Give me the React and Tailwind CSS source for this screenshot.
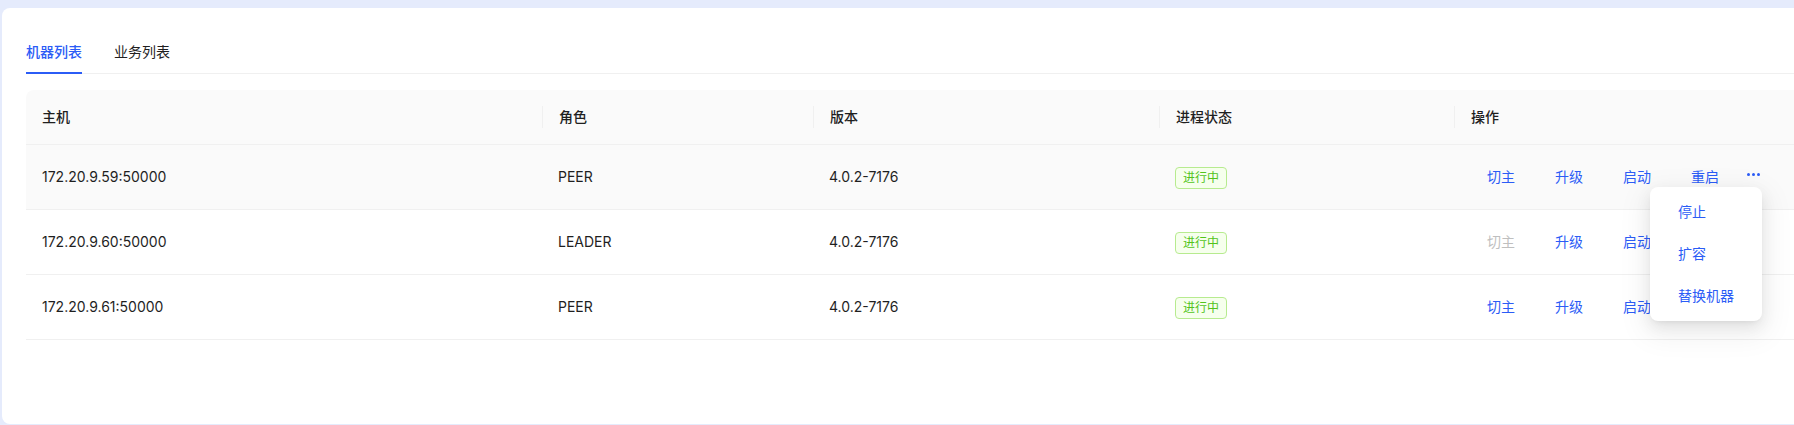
import React from "react";

const blue = "text-[#2b5cf6]";

const rows = [
    { host: "172.20.9.59:50000", role: "PEER", version: "4.0.2-7176", hover: true, canSwitch: true },
    { host: "172.20.9.60:50000", role: "LEADER", version: "4.0.2-7176", hover: false, canSwitch: false },
    { host: "172.20.9.61:50000", role: "PEER", version: "4.0.2-7176", hover: false, canSwitch: true },
];

function HeadCell({ width, children, first }) {
    return (
        <div className={`flex h-full shrink-0 items-center ${width}`}>
            {!first && <span className="h-[22px] w-px bg-[#f0f0f0]" />}
            <span className="pl-4">{children}</span>
        </div>
    );
}

function Dots() {
    return (
        <span className="mb-[6px] flex items-center gap-[2px]">
            <span className="h-[3px] w-[3px] rounded-full bg-[#2b5cf6]" />
            <span className="h-[3px] w-[3px] rounded-full bg-[#2b5cf6]" />
            <span className="h-[3px] w-[3px] rounded-full bg-[#2b5cf6]" />
        </span>
    );
}

function Menu() {
    return (
        <div className="absolute right-0 top-[26px] z-10 w-[112px] rounded-lg bg-white p-1 shadow-[0_6px_16px_0_rgba(0,0,0,0.08),0_3px_6px_-4px_rgba(0,0,0,0.12),0_9px_28px_8px_rgba(0,0,0,0.05)]">
            {["停止", "扩容", "替换机器"].map((t) => (
                <div key={t} className={`flex h-[42px] items-center whitespace-nowrap pl-6 text-sm ${blue}`}>
                    {t}
                </div>
            ))}
        </div>
    );
}

export default function App() {
    return (
        <div
            className="h-[425px] w-full overflow-hidden bg-[#e5ebfc] pl-[2px] pt-2"
            style={{ fontFamily: 'Inter, "Noto Sans CJK SC", sans-serif' }}
        >
            <div className="h-[416px] w-[1860px] rounded-lg bg-white pl-6 pt-[19px]">
                {/* tabs */}
                <nav className="flex gap-8 border-b border-[#f0f0f0] text-sm leading-[22px]">
                    <div className={`relative pb-[10px] pt-[14px] font-medium ${blue}`}>
                        机器列表
                        <span className="absolute bottom-[-1px] left-0 h-[2px] w-full bg-[#2b5cf6]" />
                    </div>
                    <div className="pb-[10px] pt-[14px] text-[#1f1f1f]">业务列表</div>
                </nav>

                {/* table */}
                <div className="mt-4 w-[1810px] text-sm leading-[22px] text-[#1f1f1f]">
                    <div className="flex h-[55px] items-center rounded-t-lg border-b border-[#f0f0f0] bg-[#fafafa] font-medium">
                        <HeadCell width="w-[516px]" first>主机</HeadCell>
                        <HeadCell width="w-[271px]">角色</HeadCell>
                        <HeadCell width="w-[346px]">版本</HeadCell>
                        <HeadCell width="w-[295px]">进程状态</HeadCell>
                        <HeadCell width="flex-1">操作</HeadCell>
                    </div>

                    {rows.map((r, i) => (
                        <div
                            key={r.host}
                            className={`flex h-[65px] items-center border-b border-[#f0f0f0] ${r.hover ? "bg-[#fafafa]" : "bg-white"}`}
                        >
                            <div className="w-[516px] shrink-0 px-4">{r.host}</div>
                            <div className="w-[271px] shrink-0 px-4">{r.role}</div>
                            <div className="w-[346px] shrink-0 px-4">{r.version}</div>
                            <div className="w-[295px] shrink-0 px-4">
                                <span className="inline-block rounded border border-[#b7eb8f] bg-[#f6ffed] px-[7px] text-xs leading-5 text-[#52c41a]">
                                    进行中
                                </span>
                            </div>
                            <div className="flex flex-1 items-center gap-[10px] pl-[18px]">
                                <span className={`h-8 px-[15px] leading-8 ${r.canSwitch ? blue : "text-[#bfbfbf]"}`}>切主</span>
                                <span className={`h-8 px-[15px] leading-8 ${blue}`}>升级</span>
                                <span className={`h-8 px-[15px] leading-8 ${blue}`}>启动</span>
                                <span className={`h-8 px-[15px] leading-8 ${blue}`}>重启</span>
                                <span className="relative flex h-8 items-center pl-[3px] pr-[2px]">
                                    <Dots />
                                    {i === 0 && <Menu />}
                                </span>
                            </div>
                        </div>
                    ))}
                </div>
            </div>
        </div>
    );
}
